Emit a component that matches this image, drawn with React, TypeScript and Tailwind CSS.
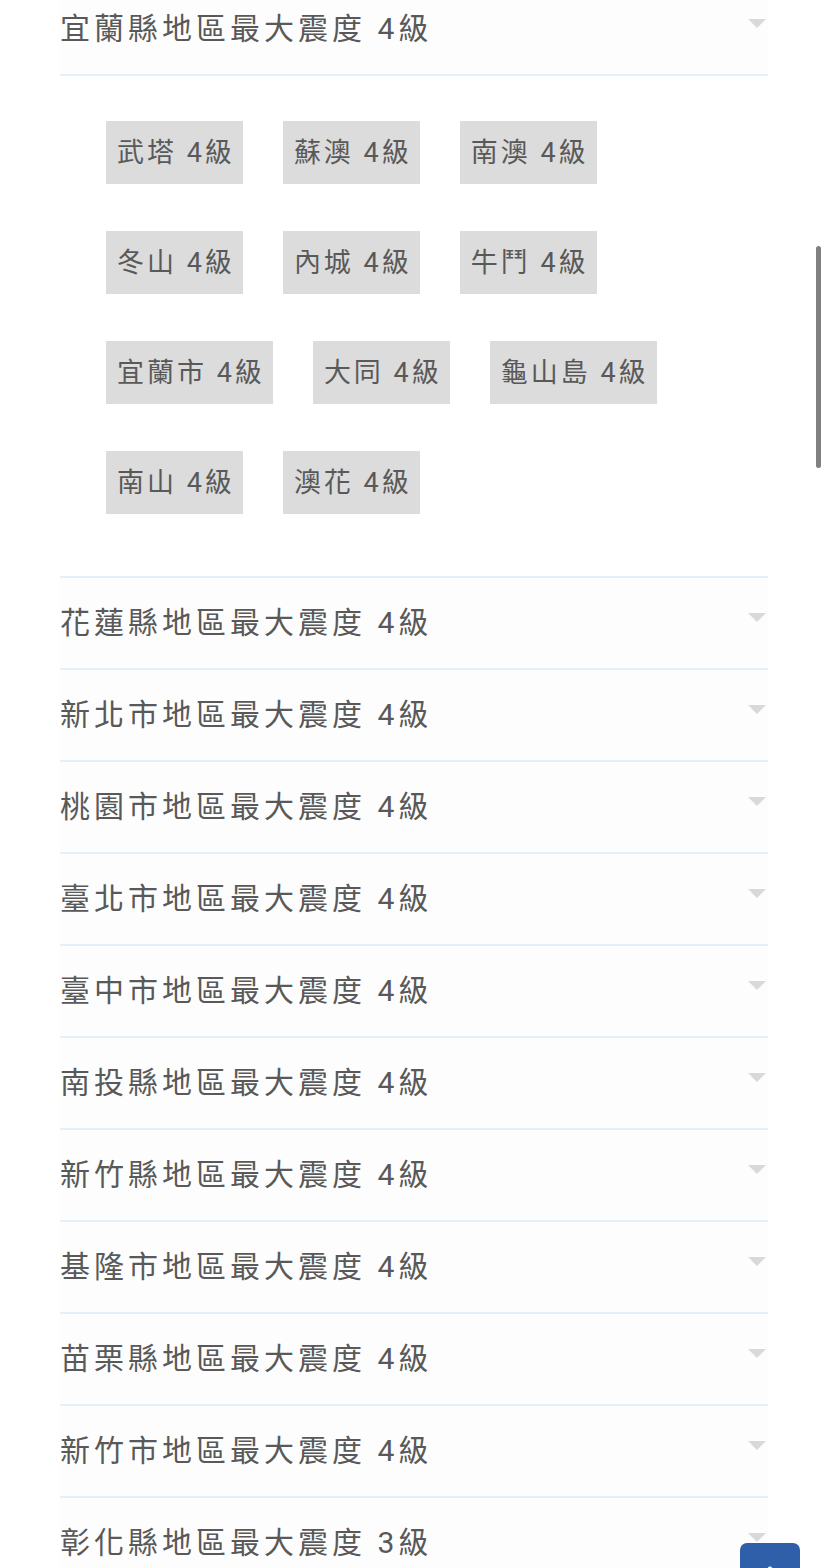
import React from "react";

const font = { fontFamily: "Roboto, 'Noto Sans CJK TC', 'Noto Sans', sans-serif" };

const towns = [
  "武塔", "蘇澳", "南澳",
  "冬山", "內城", "牛鬥",
  "宜蘭市", "大同", "龜山島",
  "南山", "澳花",
];

const regions: [string, number][] = [
  ["花蓮縣", 4],
  ["新北市", 4],
  ["桃園市", 4],
  ["臺北市", 4],
  ["臺中市", 4],
  ["南投縣", 4],
  ["新竹縣", 4],
  ["基隆市", 4],
  ["苗栗縣", 4],
  ["新竹市", 4],
  ["彰化縣", 3],
];

function Header({ name, level }: { name: string; level: number }) {
  return (
    <div className="flex h-[92px] justify-between border-b-2 border-[#e4eff9] bg-[#fdfdfd] pr-[2px]">
      <div className="flex items-center pb-[2px] text-[30px] tracking-[4px] text-[#595959]">
        {name}地區最大震度 {level}級
      </div>
      <svg width="18" height="9" viewBox="0 0 18 9" className="mt-[35px] shrink-0">
        <path d="M0 0 L18 0 L9 9 Z" fill="#d9d9d9" />
      </svg>
    </div>
  );
}

export default function App() {
  return (
    <div className="relative h-[1568px] overflow-hidden bg-white" style={font}>
      <div className="mx-[60px] -mt-[16px]">
        <Header name="宜蘭縣" level={4} />
        <div className="flex flex-wrap gap-x-[40px] gap-y-[47px] border-b-2 border-[#e4eff9] bg-white pt-[45px] pb-[62px] pl-[46px]">
          {towns.map((t) => (
            <div
              key={t}
              className="flex h-[63px] items-center bg-[#dcdcdc] pt-[2px] pl-[11px] pr-[8px] text-[27px] tracking-[3px] text-[#595959]"
            >
              {t} 4級
            </div>
          ))}
        </div>
        {regions.map(([n, l]) => (
          <Header key={n} name={n} level={l} />
        ))}
      </div>

      {/* scroll indicator */}
      <div className="absolute left-[816px] top-[246px] h-[222px] w-[5px] rounded-full bg-[#808080]" />

      {/* back to top button */}
      <div className="absolute left-[740px] top-[1543px] flex h-[40px] w-[60px] justify-center rounded-t-[7px] bg-[#2f5fa8]">
        <svg width="14" height="14" viewBox="0 0 14 14" className="mt-[23px]">
          <path d="M7 1 L1 7 M7 1 L13 7 M7 1 L7 13" stroke="#ffffff" strokeWidth="2" fill="none" />
        </svg>
      </div>
    </div>
  );
}
